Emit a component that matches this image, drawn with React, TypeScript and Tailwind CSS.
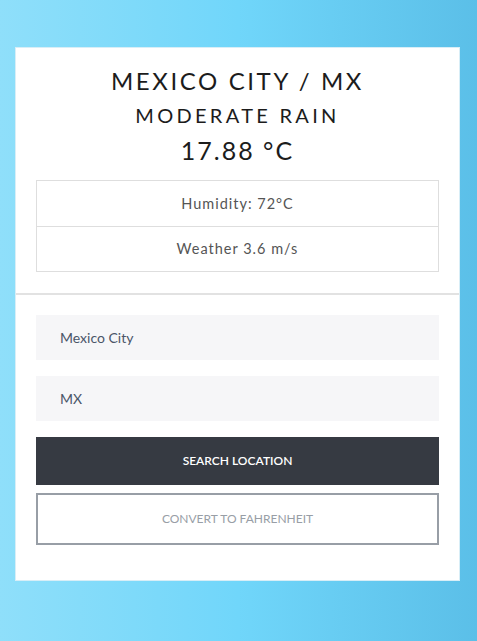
import React from 'react';

const rows = ['Humidity: 72°C', 'Weather 3.6 m/s'];

export default function App() {
  return (
    <div
      className="min-h-[641px] w-full bg-gradient-to-r from-[#8fdffa] via-[#70d6fa] to-[#5bbfe8] pt-[47px] pb-[60px]"
      style={{ fontFamily: 'Lato, "Open Sans", sans-serif' }}
    >
      <div className="mx-[15px] w-[445px] border border-[#d8eef7] bg-white pb-[35px]">
        {/* Header */}
        <div className="flex flex-col items-center pt-[16px] text-[#1c1c1c]">
          <h1 className="text-[24px] leading-[34px] tracking-[2.6px]">MEXICO CITY / MX</h1>
          <h2 className="text-[20px] leading-[34px] tracking-[3.3px]">MODERATE RAIN</h2>
          <p className="text-[25px] leading-[36px] tracking-[2px]">17.88 °C</p>
        </div>

        <div className="mx-[20px] mt-[12px] border border-[#dedede]">
          {rows.map((r, i) => (
            <div
              key={r}
              className={`flex h-[45px] items-center justify-center text-[14.5px] tracking-[1px] text-[#555] ${
                i > 0 ? 'border-t border-[#dedede]' : ''
              }`}
            >
              {r}
            </div>
          ))}
        </div>

        <div className="mt-[21px] h-[2px] bg-[#e2e2e2]" />

        {/* Form */}
        <div className="mx-[20px] mt-[20px] flex flex-col">
          <input
            defaultValue="Mexico City"
            className="h-[45px] bg-[#f6f6f8] px-[24px] text-[14px] text-[#4a5568] outline-none"
          />
          <input
            defaultValue="MX"
            className="mt-[16px] h-[45px] bg-[#f6f6f8] px-[24px] text-[14px] text-[#4a5568] outline-none"
          />
          <button className="mt-[16px] h-[48px] bg-[#363a42] text-[12px] font-semibold text-white">
            SEARCH LOCATION
          </button>
          <button className="mt-[8px] h-[52px] border-2 border-[#989ea6] bg-white text-[12px] text-[#989ea6]">
            CONVERT TO FAHRENHEIT
          </button>
        </div>
      </div>
    </div>
  );
}
